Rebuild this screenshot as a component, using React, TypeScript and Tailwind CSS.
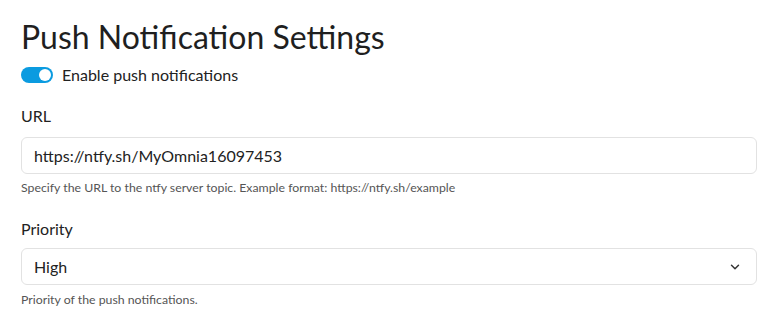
import React, { useState } from "react";

export default function App() {
  const [enabled, setEnabled] = useState(true);

  return (
    <div className="min-h-screen bg-white px-[21px] pt-[17px] font-['Lato',sans-serif] text-[#222]">
      <h1 className="text-[32px] leading-[40px] text-[#1f1f1f]">Push Notification Settings</h1>

      <label className="mt-[6px] flex items-center gap-[9px]">
        <button
          type="button"
          onClick={() => setEnabled(!enabled)}
          className={`flex h-[16px] w-[32px] items-center rounded-full px-[2px] ${enabled ? "justify-end bg-[#0b9be0]" : "justify-start bg-gray-300"}`}
        >
          <span className="h-[12px] w-[12px] rounded-full bg-white" />
        </button>
        <span className="text-[16px] text-[#222]">Enable push notifications</span>
      </label>

      <div className="mt-[19px]">
        <div className="text-[16px] leading-[20px] text-[#222]">URL</div>
        <div className="mt-[11px] flex h-[37px] w-[736px] items-center rounded-[6px] border border-[#e2e2e2] px-[12px] text-[16px] text-[#222]">
          https://ntfy.sh/MyOmnia16097453
        </div>
        <div className="mt-[5px] text-[12.3px] leading-[18px] text-[#555]">
          Specify the URL to the ntfy server topic. Example format: https://ntfy.sh/example
        </div>
      </div>

      <div className="mt-[22px]">
        <div className="text-[16px] leading-[20px] text-[#222]">Priority</div>
        <div className="mt-[9px] flex h-[37px] w-[736px] items-center justify-between rounded-[6px] border border-[#e2e2e2] pl-[12px] pr-[14px] text-[16px] text-[#222]">
          <span>High</span>
          <svg width="14" height="14" viewBox="0 0 24 24" fill="none" stroke="#333" strokeWidth="2.5" strokeLinecap="round" strokeLinejoin="round">
            <path d="M6 9l6 6 6-6" />
          </svg>
        </div>
        <div className="mt-[6px] text-[12.3px] leading-[18px] text-[#555]">Priority of the push notifications.</div>
      </div>
    </div>
  );
}
